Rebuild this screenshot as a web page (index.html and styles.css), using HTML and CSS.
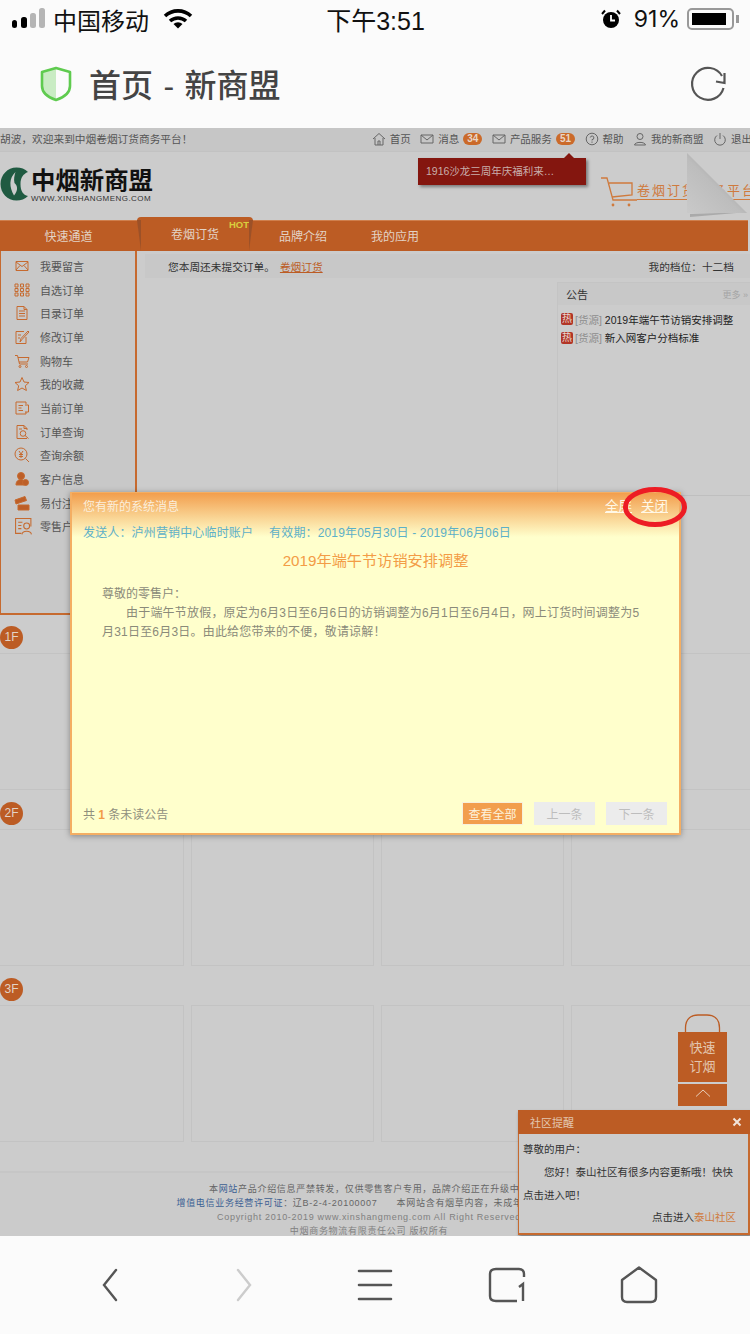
FILE: index.html
```html
<!DOCTYPE html>
<html lang="en">
<head>
    <meta charset="UTF-8">
    <meta name="viewport" content="width=device-width, initial-scale=1.0">
    <title>首页 - 新商盟</title>
    <link rel="stylesheet" href="styles.css">
</head>
<body>
    <div class="status">
        <div class="status-left">
            <svg class="signal" width="34" height="22" viewBox="0 0 34 22">
                <rect x="0" y="12" width="5" height="8" rx="2.5" fill="#000"/>
                <rect x="9" y="9" width="6" height="11" rx="2.5" fill="#000"/>
                <rect x="18" y="5" width="6" height="15" rx="2.5" fill="#b5b5b5"/>
                <rect x="27" y="0" width="6" height="20" rx="2.5" fill="#b5b5b5"/>
            </svg>
            <span class="carrier">中国移动</span>
            <svg class="wifi" width="30" height="22" viewBox="0 0 30 22">
                <path d="M2 8 A19 19 0 0 1 28 8" fill="none" stroke="#000" stroke-width="3.6"/>
                <path d="M7 13 A12 12 0 0 1 23 13" fill="none" stroke="#000" stroke-width="3.6"/>
                <path d="M10.5 16 A6.5 6.5 0 0 1 19.500 16 L15 20.500 Z" fill="#000"/>
            </svg>
        </div>
        <div class="status-time">下午3:51</div>
        <div class="status-right">
            <svg width="20" height="20" viewBox="0 0 20 20">
                <circle cx="10" cy="11" r="8" fill="#000"/>
                <path d="M10 6 V11.500 H14" fill="none" stroke="#fff" stroke-width="1.800"/>
                <path d="M1 5 L4 1.500 M19 5 L16 1.500" stroke="#000" stroke-width="2"/>
            </svg>
            <span class="battery-pct">91%</span>
            <span class="battery"><span class="battery-fill"></span></span>
            <span class="battery-tip"></span>
        </div>
    </div>

    <div class="addr">
        <svg class="shield" width="32" height="36" viewBox="0 0 32 36">
            <path d="M16 2 L30 6 V20 C30 28 22 32 16 34 Z" fill="#fbfbfb"/>
            <path d="M16 2 L2 6 V20 C2 28 10 32 16 34 Z" fill="#c9ecc3"/>
            <path d="M16 2 L30 6 V20 C30 28 22 32 16 34 C10 32 2 28 2 20 V6 Z" fill="none" stroke="#5fcb4f" stroke-width="2.600" stroke-linejoin="round"/>
        </svg>
        <span class="addr-title">首页 - 新商盟</span>
        <svg class="reload" width="38" height="38" viewBox="0 0 38 38">
            <path d="M33 11 A16 16 0 1 0 34.500 23" fill="none" stroke="#555" stroke-width="2.200"/>
            <path d="M35.500 8 V18 L27 16.500" fill="none" stroke="#555" stroke-width="2.200"/>
        </svg>
    </div>

    <div class="site">
        <div class="topbar">
            <span class="welcome">胡波，欢迎来到中烟卷烟订货商务平台！</span>
            <div class="toplinks">
                <span class="toplink">
                    <svg width="14" height="14" viewBox="0 0 14 14"><path d="M1 7 L7 1.500 L13 7 M3 6 V13 H11 V6 M6 13 V9 H8 V13" fill="none" stroke="#666" stroke-width="1"/></svg>首页
                </span>
                <span class="toplink">
                    <svg width="14" height="14" viewBox="0 0 14 14"><path d="M1 3 H13 V11 H1 Z M1 3 L7 8 L13 3" fill="none" stroke="#666" stroke-width="1"/></svg>消息<b class="pill">34</b>
                </span>
                <span class="toplink">
                    <svg width="14" height="14" viewBox="0 0 14 14"><path d="M1 3 H13 V11 H1 Z M1 3 L7 8 L13 3" fill="none" stroke="#666" stroke-width="1"/></svg>产品服务<b class="pill">51</b>
                </span>
                <span class="toplink">
                    <svg width="14" height="14" viewBox="0 0 14 14"><circle cx="7" cy="7" r="5.800" fill="none" stroke="#666"/><path d="M5.300 5.500 A1.800 1.800 0 1 1 7 7.600 V8.500 M7 9.500 V10.800" fill="none" stroke="#666"/></svg>帮助
                </span>
                <span class="toplink">
                    <svg width="14" height="14" viewBox="0 0 14 14"><circle cx="7" cy="4.500" r="3" fill="none" stroke="#666"/><path d="M1.500 13 C2 9.500 12 9.500 12.500 13 Z" fill="none" stroke="#666"/></svg>我的新商盟
                </span>
                <span class="toplink">
                    <svg width="14" height="14" viewBox="0 0 14 14"><path d="M4 3.500 A5.300 5.300 0 1 0 10 3.500 M7 1 V7" fill="none" stroke="#666"/></svg>退出
                </span>
            </div>
        </div>

        <div class="brand">
            <svg class="logo-mark" width="30" height="34" viewBox="0 0 30 34">
                <path d="M28 5 C25 1.800 21 0.500 16.500 0.500 C7.500 0.500 0.500 8 0.500 17 C0.500 26 7.500 33.500 16.500 33.500 C21 33.500 25 32 28 29 C23 28 20.500 24 20.500 17 C20.500 11 23 7 28 5 Z" fill="#1f5a41"/>
                <path d="M15.500 5 C9 11 9 20 14 28.500 C18 24 18 19 14.500 16 C13.500 12 14.500 8 15.500 5 Z" fill="#ccc"/>
            </svg>
            <div class="logo-text">
                <div class="logo-name">中烟新商盟</div>
                <div class="logo-url">WWW.XINSHANGMENG.COM</div>
            </div>
            <div class="brand-right">
                <svg width="37" height="30" viewBox="0 0 37 30">
                    <path d="M1 1 H7 L13 23 H37 M9 6 H32 V18 L12 20" fill="none" stroke="#cf7a3d" stroke-width="1.300"/>
                    <circle cx="13" cy="28" r="1.400" fill="#cf7a3d"/>
                    <circle cx="29" cy="28" r="1.400" fill="#cf7a3d"/>
                </svg>
                <span class="brand-slogan">卷烟订货商务平台</span>
            </div>
        </div>

        <div class="nav">
            <div class="nav-quick">快速通道</div>
            <div class="nav-tab">卷烟订货<b class="hot">HOT</b></div>
            <div class="nav-item">品牌介绍</div>
            <div class="nav-item">我的应用</div>
        </div>

        <div class="main">
            <ul class="side">
                <li><svg viewBox="0 0 16 16"><path d="M2 3.500 H14 V12.500 H2 Z M2 4 L8 8.500 L14 4 M2 12 L6 7.500 M14 12 L10 7.500"/></svg>我要留言</li>
                <li><svg viewBox="0 0 16 16"><path d="M1 2 H4 V5 H1 Z M6.500 2 H9.500 V5 H6.500 Z M12 2 H15 V5 H12 Z M1 6.500 H4 V9.500 H1 Z M12 6.500 H15 V9.500 H12 Z M6.500 6.500 H9.500 V9.500 H6.500 Z M1 11 H4 V14 H1 Z M6.500 11 H9.500 V14 H6.500 Z M12 11 H15 V14 H12 Z"/></svg>自选订单</li>
                <li><svg viewBox="0 0 16 16"><path d="M3 1.500 H10 L13 4.500 V14.500 H3 Z M10 1.500 V4.500 H13 M5 6 H11 M5 8.500 H11 M5 11 H11"/></svg>目录订单</li>
                <li><svg viewBox="0 0 16 16"><path d="M12 8 V14.500 H2 V2.500 H10 M6 13 L7 9.500 L14 2 L15 3 L8 10.500 Z M4 6 H7 M4 9 H6"/></svg>修改订单</li>
                <li><svg viewBox="0 0 16 16"><path d="M1 2.500 H3.500 L5.500 11 H14 M4 4.500 H15 L13.500 9 H5"/><circle cx="6" cy="13.500" r="1"/><circle cx="12.500" cy="13.500" r="1"/></svg>购物车</li>
                <li><svg viewBox="0 0 16 16"><path d="M8 1.500 L10 6 L15 6.500 L11.300 9.800 L12.400 14.500 L8 12 L3.600 14.500 L4.700 9.800 L1 6.500 L6 6 Z"/></svg>我的收藏</li>
                <li><svg viewBox="0 0 16 16"><path d="M12 4 V2 H2 V14 H12 V12 M4.500 5.500 H9 M4.500 8 H7.500 M4.500 10.500 H9 M11 5 H14.500 V12 H11"/></svg>当前订单</li>
                <li><svg viewBox="0 0 16 16"><path d="M13 6 V4.500 L10 1.500 H3 V14.500 H13 M10 1.500 V4.500 H13"/><circle cx="9" cy="9.500" r="2.800"/><path d="M11 11.500 L14.500 14.500 M5 5 H8"/></svg>订单查询</li>
                <li><svg viewBox="0 0 16 16"><circle cx="7" cy="7" r="6"/><path d="M11.500 11.500 L15 15 M5 4 L7 7 L9 4 M5 7.500 H9 M5 9.500 H9 M7 7 V11"/></svg>查询余额</li>
                <li><svg viewBox="0 0 16 16" class="solid"><circle cx="7" cy="5" r="3.500"/><path d="M2 14 C2 9.500 5 8.500 7 8.500 C9 8.500 10 9.500 10 14 Z"/><circle cx="11.500" cy="11.500" r="3"/></svg>客户信息</li>
                <li><svg viewBox="0 0 16 16" class="solid"><path d="M1 5 L11 1.500 L12.500 5.500 L2 9 Z M4 10 H15 V15 H4 Z"/></svg>易付注册</li>
                <li class="side-big"><svg viewBox="0 0 18 18"><path d="M16 9 V1.500 H1.500 V15.500 H7 M4 5 H8 M4 8 H7 M4 11 H7"/><circle cx="12" cy="8.500" r="2.800"/><path d="M7.500 16.500 C8 12.500 16 12.500 16.500 16.500"/></svg>零售户</li>
            </ul>
            <div class="content">
                <div class="notice">
                    <span>您本周还未提交订单。<a class="notice-link">卷烟订货</a></span>
                    <span>我的档位：十二档</span>
                </div>
                <div class="news">
                    <div class="news-head">
                        <span>公告</span>
                        <span class="more">更多 »</span>
                    </div>
                    <div class="news-row"><i class="tag">热</i><span class="cat">[货源]</span> 2019年端午节访销安排调整</div>
                    <div class="news-row"><i class="tag">热</i><span class="cat">[货源]</span> 新入网客户分档标准</div>
                </div>
            </div>
        </div>

        <div class="floor">
            <div class="floor-badge">1F</div>
            <div class="floor-grid"><div></div><div></div><div></div><div></div></div>
        </div>
        <div class="floor">
            <div class="floor-badge">2F</div>
            <div class="floor-grid"><div></div><div></div><div></div><div></div></div>
        </div>
        <div class="floor">
            <div class="floor-badge">3F</div>
            <div class="floor-grid"><div></div><div></div><div></div><div></div></div>
        </div>

        <div class="footer">
            <p>本<span class="blue">网站</span>产品介绍信息严禁转发，仅供零售客户专用，品牌介绍正在升级中。</p>
            <p><span class="blue">增值电信业务经营许可证</span>：辽B-2-4-20100007 &nbsp; &nbsp; &nbsp;本网站含有烟草内容，未成年人请勿入</p>
            <p class="light latin">Copyright 2010-2019 www.xinshangmeng.com All Right Reserved</p>
            <p class="light">中烟商务物流有限责任公司 版权所有</p>
        </div>

        <div class="ribbon">1916沙龙三周年庆福利来…</div>
        <svg class="fold" width="66" height="66" viewBox="0 0 66 66">
            <defs>
                <linearGradient id="foldGrad" x1="0" y1="1" x2="1" y2="0">
                    <stop offset="0" stop-color="#c9c9c9"/>
                    <stop offset=".45" stop-color="#bdbdbd"/>
                    <stop offset="1" stop-color="#858585"/>
                </linearGradient>
            </defs>
            <path d="M4 62 L62 60 L4 65 Z" fill="#aaa"/>
            <path d="M1 1 L61 61 L1 61 Z" fill="url(#foldGrad)"/>
        </svg>

        <div class="modal">
            <div class="modal-head">
                <span>您有新的系统消息</span>
                <span class="modal-actions"><a>全屏</a><a>关闭</a></span>
            </div>
            <div class="modal-meta">
                <span>发送人：泸州营销中心临时账户</span>
                <span>有效期：2019年05月30日 - 2019年06月06日</span>
            </div>
            <h2 class="modal-title">2019年端午节访销安排调整</h2>
            <div class="modal-body">
                <p>尊敬的零售户：</p>
                <p class="indent">由于端午节放假，原定为6月3日至6月6日的访销调整为6月1日至6月4日，网上订货时间调整为5月31日至6月3日。由此给您带来的不便，敬请谅解！</p>
            </div>
            <div class="modal-foot">
                <span>共 <b class="count">1</b> 条未读公告</span>
                <span class="modal-btns">
                    <button class="btn-all">查看全部</button>
                    <button class="btn-off">上一条</button>
                    <button class="btn-off">下一条</button>
                </span>
            </div>
        </div>
        <svg class="circle-mark" width="70" height="44" viewBox="0 0 70 44">
            <ellipse cx="35" cy="22" rx="29.500" ry="17.500" fill="none" stroke="#ed1c24" stroke-width="5"/>
        </svg>

        <div class="quick">
            <svg class="quick-handle" width="37" height="19" viewBox="0 0 37 19">
                <path d="M1.500 19 V14 C1.500 4 8 1 14 1 H23 C29 1 35.500 4 35.500 14 V19" fill="none" stroke="#bc5c24" stroke-width="1.300"/>
            </svg>
            <div class="quick-body">快速<br>订烟</div>
            <div class="quick-up">
                <svg width="16" height="8" viewBox="0 0 16 8"><path d="M1 7.500 L8 1 L15 7.500" fill="none" stroke="#e6cdb8" stroke-width="1"/></svg>
            </div>
        </div>

        <div class="popup">
            <div class="popup-head">
                <span>社区提醒</span>
                <svg width="10" height="10" viewBox="0 0 10 10"><path d="M1.500 1.500 L8.500 8.500 M8.500 1.500 L1.500 8.500" fill="none" stroke="#f2e5da" stroke-width="2"/></svg>
            </div>
            <div class="popup-body">
                <p>尊敬的用户：</p>
                <p class="indent">您好！泰山社区有很多内容更新哦！快快点击进入吧！</p>
                <p class="popup-link">点击进入<span>泰山社区</span></p>
            </div>
        </div>
    </div>

    <div class="toolbar">
        <svg width="20" height="36" viewBox="0 0 20 36"><path d="M15 3 L3 18 L15 33" fill="none" stroke="#555" stroke-width="2.400" stroke-linecap="round"/></svg>
        <svg width="20" height="36" viewBox="0 0 20 36"><path d="M5 3 L17 18 L5 33" fill="none" stroke="#ccc" stroke-width="2.400" stroke-linecap="round"/></svg>
        <svg width="36" height="36" viewBox="0 0 36 36"><path d="M2 4 H34 M2 18 H34 M2 32 H34" fill="none" stroke="#555" stroke-width="2.600" stroke-linecap="round"/></svg>
        <svg width="38" height="38" viewBox="0 0 38 38"><path d="M36 11 V8 Q36 3 31 3 H8 Q2 3 2 8 V30 Q2 35 8 35 H29" fill="none" stroke="#555" stroke-width="2.400"/><path d="M31 21 L35 18 V35" fill="none" stroke="#555" stroke-width="2.400"/></svg>
        <svg width="40" height="40" viewBox="0 0 40 40"><path d="M20 2.500 L37 15 V32 Q37 37 32 37 H8 Q3 37 3 32 V15 Z" fill="none" stroke="#555" stroke-width="2.400" stroke-linejoin="round"/></svg>
    </div>
</body>
</html>
```

FILE: styles.css
```css
* {
    box-sizing: border-box;
}
body {
    margin: 0;
    width: 750px;
    height: 1334px;
    overflow: hidden;
    background: #fbfbfb;
    font-family: "Liberation Sans", "Noto Sans CJK SC", sans-serif;
}
p, h2, ul {
    margin: 0;
    padding: 0;
}

/* phone status bar */
.status {
    height: 42px;
    padding: 0 11px 4px 12px;
    display: grid;
    grid-template-columns: 1fr auto 1fr;
    align-items: center;
    color: #111;
    font-size: 24px;
}
.status-left, .status-right {
    display: flex;
    align-items: center;
}
.status-right {
    justify-content: flex-end;
}
.carrier {
    margin-left: 7px;
}
.wifi {
    margin-left: 14px;
}
.status-time {
    font-size: 25px;
}
.battery-pct {
    margin: 0 7px 0 13px;
    font-family: Inter, "Liberation Sans", sans-serif;
    font-size: 23px;
}
.battery {
    width: 47px;
    height: 22px;
    padding: 3px;
    border: 2px solid #999;
    border-radius: 5px;
    display: block;
}
.battery-fill {
    display: block;
    width: 91%;
    height: 100%;
    background: #000;
}
.battery-tip {
    width: 3px;
    height: 8px;
    margin-left: 2px;
    background: #999;
}

/* browser address row */
.addr {
    height: 86px;
    padding: 0 23px 2px 40px;
    display: flex;
    align-items: center;
    background: #fbfbfb;
}
.addr-title {
    margin: 0 0 2px 17px;
    flex: 1;
    font-size: 32px;
    color: #444;
    font-weight: 500;
    word-spacing: 1.500px;
}

/* dimmed site */
.site {
    position: relative;
    height: 1108px;
    overflow: hidden;
    background: #cccccc;
    color: #555;
    font-size: 11px;
}
.topbar {
    height: 24px;
    padding-bottom: 2px;
    display: flex;
    justify-content: space-between;
    align-items: center;
    background: #c6c6c6;
    border-bottom: 1px solid #c2c2c2;
    white-space: nowrap;
}
.welcome {
    font-size: 10.700px;
}
.toplinks {
    display: flex;
    align-items: center;
    margin-right: -2px;
}
.toplink {
    display: flex;
    align-items: center;
    margin-left: 9.500px;
    font-size: 10.500px;
}
.toplink svg {
    margin-right: 4px;
}
.pill {
    margin-left: 4px;
    padding: 0 4px;
    height: 12px;
    line-height: 12px;
    border-radius: 6px;
    background: #cb6a2a;
    color: #e9d6c6;
    font-size: 10px;
    font-weight: 700;
}

.brand {
    height: 68px;
    padding-top: 14px;
    display: flex;
    position: relative;
}
.logo-mark {
    margin-top: 1px;
    flex: none;
}
.logo-text {
    margin: 1px 0 0 1px;
}
.logo-name {
    font-size: 24.400px;
    line-height: 28px;
    font-weight: 700;
    color: #111;
    white-space: nowrap;
}
.logo-url {
    margin-top: -1px;
    font-size: 8px;
    line-height: 9px;
    color: #333;
    letter-spacing: .45px;
}
.brand-right {
    margin-left: auto;
    margin-top: 11px;
    display: flex;
    width: 150px;
    white-space: nowrap;
    overflow: hidden;
}
.brand-right svg {
    flex: none;
}
.brand-slogan {
    flex: 1;
    height: 23px;
    line-height: 28px;
    font-size: 13px;
    letter-spacing: 2px;
    color: #cf7a3d;
    border-bottom: 1px solid #cf7a3d;
}

.nav {
    height: 31px;
    margin-right: 2px;
    padding-bottom: 1px;
    display: flex;
    align-items: center;
    background: #bc5c24;
    border-top: 1px solid #cf7f4d;
    color: #e3d3c6;
    font-size: 12px;
}
.nav-quick {
    width: 137px;
    text-align: center;
}
.nav-tab {
    position: relative;
    width: 116px;
    height: 34px;
    margin-top: -3px;
    padding: 8px 0 0 34px;
    background: #bc5c24;
    border-radius: 4px 4px 0 0;
}
.nav-tab::before, .nav-tab::after {
    content: "";
    position: absolute;
    top: 3px;
    bottom: 0;
    width: 4px;
    background: #9c5128;
}
.nav-tab::before {
    left: 0;
    clip-path: polygon(0 0, 100% 0, 100% 100%);
}
.nav-tab::after {
    right: 0;
    clip-path: polygon(0 0, 100% 0, 0 100%);
}
.hot {
    position: absolute;
    top: 2px;
    right: 4px;
    color: #d8cf3e;
    font-size: 9.500px;
}
.nav-item {
    margin-left: 26px;
    margin-right: 18px;
}

.main {
    height: 363px;
    display: flex;
}
.side {
    width: 137px;
    height: 364px;
    padding-top: 3px;
    list-style: none;
    background: #c8c8c8;
    border: 2px solid #c66a2f;
    border-top: 0;
    border-left-width: 1px;
    font-size: 11px;
}
.side li {
    height: 23.700px;
    display: flex;
    align-items: center;
    padding-left: 13px;
    white-space: nowrap;
}
.side svg {
    width: 16px;
    height: 16px;
    margin-right: 10px;
    fill: none;
    stroke: #c66a2f;
    stroke-width: 1;
    flex: none;
}
.side svg.solid {
    fill: #bd5f28;
}
.side .side-big svg {
    width: 19px;
    height: 19px;
    margin-right: 7px;
}
.content {
    flex: 1;
    padding-top: 3px;
    min-width: 0;
}
.notice {
    margin-left: 8px;
    height: 24px;
    padding: 0 16px 0 23px;
    display: flex;
    justify-content: space-between;
    align-items: center;
    background: #c8c8c8;
    color: #333;
    font-size: 10.700px;
}
.notice-link {
    margin-left: 5px;
    color: #bc5c24;
    text-decoration: underline;
}
.news {
    width: 193px;
    height: 214px;
    margin: 4px 0 0 420px;
    border: 1px solid #c4c4c4;
    border-bottom-color: #bfbfbf;
    border-right: 0;
}
.news-head {
    height: 22px;
    padding: 0 0 0 8px;
    display: flex;
    justify-content: space-between;
    align-items: center;
    background: #c8c8c8;
    color: #333;
}
.more {
    color: #a5a5a5;
    font-size: 9px;
    margin-right: 2px;
}
.news-row {
    height: 18.500px;
    display: flex;
    align-items: center;
    white-space: nowrap;
    color: #222;
    font-size: 10.500px;
}
.news-head + .news-row {
    margin-top: 5px;
}
.tag {
    width: 12px;
    height: 12px;
    margin: 0 2px 0 3px;
    background: #b23526;
    border-radius: 2px;
    color: #e8d8d0;
    font-size: 10px;
    line-height: 12px;
    font-style: normal;
    text-align: center;
}
.cat {
    margin-right: 3px;
    color: #8e8e8e;
}

.floor {
    height: 176px;
    padding-top: 12px;
}
.floor-badge {
    width: 23px;
    height: 23px;
    margin-bottom: 4px;
    border-radius: 50%;
    background: #bc5c24;
    color: #e3d3c6;
    font-size: 12px;
    line-height: 23px;
    text-align: center;
}
.floor-grid {
    display: grid;
    grid-template-columns: 184px 183px 183px 184px;
    column-gap: 7px;
    height: 137px;
}
.floor-grid div {
    border: 1px solid #c3c3c3;
}
.floor-grid div:first-child {
    border-left: 0;
}
.floor-grid div:last-child {
    border-right: 0;
}

.footer {
    margin-top: 29px;
    padding: 9px 12px 0 0;
    border-top: 2px solid #c6c6c6;
    text-align: center;
    font-size: 9px;
    line-height: 14px;
    letter-spacing: .7px;
    white-space: nowrap;
    background: #cbcbcb;
    color: #666;
}
.footer .blue {
    color: #3b5f93;
}
.footer .light {
    color: #808080;
}

/* things laid over the page */
.ribbon {
    position: absolute;
    left: 418px;
    top: 30px;
    width: 168px;
    height: 27px;
    padding-left: 8px;
    line-height: 27px;
    background: #84160f;
    box-shadow: 2px 2px 3px rgba(0, 0, 0, .4);
    color: #c9aeab;
    font-size: 10.500px;
}
.ribbon::before {
    content: "";
    position: absolute;
    top: -5px;
    left: 146px;
    border: 5px solid transparent;
    border-top: 0;
    border-bottom-color: #84160f;
}
.fold {
    position: absolute;
    left: 686px;
    top: 24px;
}

.modal {
    position: absolute;
    left: 70px;
    top: 364px;
    width: 611px;
    height: 343px;
    padding: 0 11px;
    background: #ffffcc;
    border: 2px solid #f4ae63;
    border-top-width: 1px;
    box-shadow: 0 1px 6px rgba(0, 0, 0, .35);
}
.modal-head {
    margin: 0 -11px;
    height: 44px;
    padding: 5px 11px 0;
    display: flex;
    justify-content: space-between;
    background: linear-gradient(#f29e4d, #ffffcc);
    color: #fbeedb;
    font-size: 12px;
    line-height: 18px;
}
.modal-actions a {
    margin-left: 9px;
    color: #fff8e6;
    text-decoration: underline;
    font-size: 13.500px;
}
.modal-meta {
    margin-top: -13px;
    height: 18px;
    display: flex;
    gap: 16px;
    color: #5cb0c8;
    font-size: 12px;
    letter-spacing: .15px;
    line-height: 18px;
}
.modal-title {
    margin-top: 8px;
    text-align: center;
    color: #f39c46;
    font-size: 15.200px;
    font-weight: 400;
    line-height: 22px;
}
.modal-body {
    margin-top: 13px;
    padding: 0 24px 0 19px;
    color: #8a8a7a;
    font-size: 12px;
    line-height: 19px;
}
.modal-body .indent {
    text-indent: 24px;
    letter-spacing: .2px;
}
.modal-foot {
    position: absolute;
    left: 11px;
    right: 12px;
    bottom: 8px;
    display: flex;
    justify-content: space-between;
    align-items: center;
    color: #8f8f7e;
    font-size: 12px;
}
.count {
    color: #f39c46;
}
.modal-btns {
    display: flex;
    gap: 11px;
}
.modal-btns button {
    width: 61px;
    height: 23px;
    padding: 0;
    border: 1px solid #f7f0dc;
    font-family: inherit;
    font-size: 12px;
}
.btn-all {
    background: #f29e4d;
    color: #fdf3de;
}
.modal-btns .btn-off {
    border: 0;
    background: #ececec;
    color: #bdbdbd;
}
.circle-mark {
    position: absolute;
    left: 620px;
    top: 357px;
}

.quick {
    position: absolute;
    left: 678px;
    top: 886px;
    width: 49px;
}
.quick-handle {
    display: block;
    margin: 0 0 -1px 6px;
}
.quick-body {
    height: 50px;
    padding-top: 6px;
    background: #bc5c24;
    color: #e3c7b0;
    text-align: center;
    font-size: 13px;
    line-height: 19px;
}
.quick-up {
    height: 22px;
    margin-top: 2px;
    padding-top: 5px;
    background: #bc5c24;
    text-align: center;
}
.quick-up svg {
    display: block;
    margin: 0 auto;
}

.popup {
    position: absolute;
    left: 518px;
    top: 982px;
    width: 232px;
    height: 125px;
    background: #cccccc;
    border: 1px solid #c66a2f;
    border-width: 0 2px 2px 1px;
    box-shadow: 1px 2px 3px rgba(0, 0, 0, .4);
}
.popup-head {
    height: 24px;
    margin: 0 -2px 0 -1px;
    padding: 0 8px 0 12px;
    display: flex;
    justify-content: space-between;
    align-items: center;
    background: #bc5c24;
    color: #e3c7b0;
    font-size: 11px;
}
.popup-body {
    padding: 4px 4px;
    color: #333;
    font-size: 10.500px;
    line-height: 23px;
}
.popup-body .indent {
    text-indent: 21px;
    padding-right: 6px;
}
.popup-link {
    text-align: right;
    padding-right: 8px;
    line-height: 21px;
}
.popup-link span {
    color: #cf7a3d;
}

/* browser toolbar */
.toolbar {
    height: 98px;
    padding-left: 45px;
    display: grid;
    grid-template-columns: repeat(5, 132px);
    justify-items: center;
    align-items: center;
    background: #fbfbfb;
}
```
